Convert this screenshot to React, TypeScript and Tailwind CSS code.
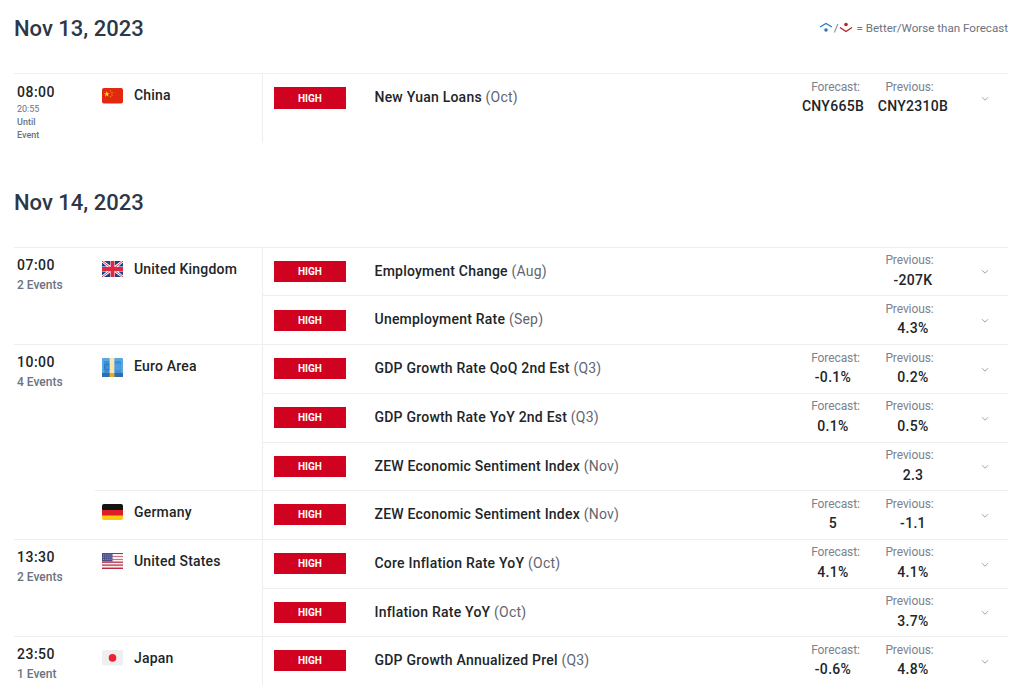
import React from "react";

type Ev = { t: string; p: string; f?: string; pv: string; h: string; o?: boolean; l?: boolean; c?: boolean };
type Ctry = { name: string; flag: React.ReactNode; events: Ev[] };
type Grp = { time: string; sub: string[]; countries: Ctry[] };

const China = () => (
  <svg width="21" height="15.5" viewBox="0 0 22 16" preserveAspectRatio="none" className="block">
    <rect width="22" height="16" rx="2" fill="#e2290f" />
    <polygon points="5,3.2 5.8,5.4 8,5.4 6.2,6.8 6.9,9 5,7.6 3.1,9 3.8,6.8 2,5.4 4.2,5.4" fill="#f8d21c" />
    <circle cx="9" cy="2.8" r=".6" fill="#f8c51c" />
    <circle cx="10.5" cy="4.8" r=".6" fill="#f8c51c" />
    <circle cx="10.5" cy="7.2" r=".6" fill="#f8c51c" />
    <circle cx="9" cy="9" r=".6" fill="#f8c51c" />
  </svg>
);
const UK = () => (
  <svg width="21" height="16" viewBox="0 0 22 16" preserveAspectRatio="none" className="block">
    <rect width="22" height="16" fill="#fff" />
    <g fill="#1f3f8f">
      <polygon points="2,0 8.5,0 8.5,4.5" />
      <polygon points="20,0 13.5,0 13.5,4.5" />
      <polygon points="2,16 8.5,16 8.5,11.5" />
      <polygon points="20,16 13.5,16 13.5,11.5" />
      <polygon points="0,1.5 5,5.5 0,5.5" />
      <polygon points="22,1.5 17,5.5 22,5.5" />
      <polygon points="0,14.5 5,10.5 0,10.5" />
      <polygon points="22,14.5 17,10.5 22,10.5" />
    </g>
    <path d="M0 0L8 6M22 0L14 6M0 16L8 10M22 16L14 10" stroke="#e0344a" strokeWidth="1" />
    <rect x="9" width="4" height="16" fill="#d92a40" />
    <rect y="6" width="22" height="4" fill="#d92a40" />
  </svg>
);
const EU = () => (
  <svg width="21" height="19" viewBox="0 0 22 19" preserveAspectRatio="none" className="block">
    <rect width="22" height="19" rx="1" fill="#58a6e6" />
    <rect x="2" y="3" width="18" height="12" fill="#3f8fd6" />
    <rect y="15" width="22" height="4" fill="#2d6ea8" />
    <circle cx="5.5" cy="9" r="3" fill="none" stroke="#2a70b4" strokeWidth="1" />
    <circle cx="16.5" cy="9" r="3.4" fill="#4f9fe0" />
    <rect x="8" width="5" height="15" fill="#f7e7b8" />
    <rect x="8" y="15" width="5" height="4" fill="#f0a52c" />
  </svg>
);
const DE = () => (
  <svg width="21" height="16" viewBox="0 0 22 16" preserveAspectRatio="none" className="block">
    <defs>
      <clipPath id="de"><rect width="22" height="16" rx="2" /></clipPath>
    </defs>
    <g clipPath="url(#de)">
      <rect width="22" height="6" fill="#141414" />
      <rect y="6" width="22" height="6" fill="#dc1f26" />
      <rect y="11.5" width="22" height="4.5" fill="#fbc90f" />
    </g>
  </svg>
);
const US = () => (
  <svg width="21" height="16" viewBox="0 0 22 16" preserveAspectRatio="none" className="block">
    <rect width="22" height="16" rx="1" fill="#f4eeee" />
    <rect y="0" width="22" height="1" fill="#b8283f" />
    <rect y="3" width="22" height="1" fill="#d0717f" />
    <rect y="6" width="22" height="1" fill="#d0717f" />
    <rect y="8.6" width="22" height="1.2" fill="#b8283f" />
    <rect y="11.5" width="22" height="1.2" fill="#b8283f" />
    <rect y="14.6" width="22" height="1.4" fill="#b8283f" />
    <rect width="11" height="8.5" fill="#4a4f8c" />
    <path d="M1 2h9M1 4.2h9M1 6.4h9" stroke="#a6a8c8" strokeWidth=".9" strokeDasharray="1 1" />
  </svg>
);
const JP = () => (
  <svg width="21" height="15.5" viewBox="0 0 22 16" preserveAspectRatio="none" className="block">
    <rect width="22" height="16" rx="2" fill="#efefef" />
    <circle cx="11" cy="8" r="4" fill="#ee2033" />
  </svg>
);

const groups: Grp[] = [
  {
    time: "07:00",
    sub: ["2 Events"],
    countries: [
      {
        name: "United Kingdom",
        flag: <UK />,
        events: [
          { t: "Employment Change", p: "(Aug)", pv: "-207K", h: "h-[47px]" },
          { t: "Unemployment Rate", p: "(Sep)", pv: "4.3%", h: "h-[49px]", o: true, l: true, c: true },
        ],
      },
    ],
  },
  {
    time: "10:00",
    sub: ["4 Events"],
    countries: [
      {
        name: "Euro Area",
        flag: <EU />,
        events: [
          { t: "GDP Growth Rate QoQ 2nd Est", p: "(Q3)", f: "-0.1%", pv: "0.2%", h: "h-[48px]", l: true, c: true },
          { t: "GDP Growth Rate YoY 2nd Est", p: "(Q3)", f: "0.1%", pv: "0.5%", h: "h-[49px]", c: true },
          { t: "ZEW Economic Sentiment Index", p: "(Nov)", pv: "2.3", h: "h-[48px]" },
        ],
      },
      {
        name: "Germany",
        flag: <DE />,
        events: [{ t: "ZEW Economic Sentiment Index", p: "(Nov)", f: "5", pv: "-1.1", h: "h-[48px]", l: true, c: true }],
      },
    ],
  },
  {
    time: "13:30",
    sub: ["2 Events"],
    countries: [
      {
        name: "United States",
        flag: <US />,
        events: [
          { t: "Core Inflation Rate YoY", p: "(Oct)", f: "4.1%", pv: "4.1%", h: "h-[48px]", c: true },
          { t: "Inflation Rate YoY", p: "(Oct)", pv: "3.7%", h: "h-[48px]" },
        ],
      },
    ],
  },
  {
    time: "23:50",
    sub: ["1 Event"],
    countries: [
      {
        name: "Japan",
        flag: <JP />,
        events: [{ t: "GDP Growth Annualized Prel", p: "(Q3)", f: "-0.6%", pv: "4.8%", h: "h-[48px]", l: true, c: true }],
      },
    ],
  },
];

const Chevron = () => (
  <svg width="8" height="6" viewBox="0 0 8 6" className="block" fill="none">
    <path d="M1 1.2L4 4.2L7 1.2" stroke="#9ca3af" strokeWidth="1" />
  </svg>
);

const Stat = ({ label, value, cls, l }: { label: string; value: string; cls: string; l?: boolean }) => (
  <div className="w-[80px] text-center">
    <div className={`text-[12px] leading-[18px] tracking-[-0.1px] text-[#7c828b] ${l ? "mt-px" : ""} ${cls}`}>{label}</div>
    <div className={`${l ? "" : "mt-px"} text-[14px] leading-[20px] font-medium text-[#212529] tracking-[0.3px] whitespace-nowrap`}>{value}</div>
  </div>
);

const Row = ({ e, first, tall }: { e: Ev; first: boolean; tall?: boolean }) => (
  <div className={`flex items-start pl-[11px] ${first ? "" : "border-t border-[#eeeeee]"} ${e.h}`}>
    <div className={e.o ? "mt-[14px]" : "mt-[13px]"}>
      <div className={`w-[72px] ${tall ? "h-[22px]" : "h-[21px]"} bg-[#d0021f] text-white text-[10px] font-bold flex items-center justify-center shrink-0`}>
        HIGH
      </div>
    </div>
    <div className="ml-[28.5px] mt-[13px] text-[14px] leading-[20px] text-[#212529] tracking-[0.22px] whitespace-nowrap flex-1">
      <span className="font-medium">{e.t}</span> <span className="text-[#5f6670]">{e.p}</span>
    </div>
    <div className="flex w-[160px] mt-[3px]">
      <div className="w-[80px]">
        {e.f && <Stat label="Forecast:" value={e.f} cls="pl-[5px]" l={e.l} />}
      </div>
      <Stat label="Previous:" value={e.pv} cls="pr-[7px]" l={e.l} />
    </div>
    <div className={`w-[55px] pl-[28px] ${e.c ? "mt-[22px]" : "mt-[21px]"}`}><Chevron /></div>
  </div>
);

export default function App() {
  return (
    <div className="w-[1009px] h-[685px] overflow-hidden bg-white pl-[14px] pr-px font-['Roboto',sans-serif]">
      <div className="flex items-center justify-between h-[56px]">
        <h2 className="text-[22px] font-medium text-[#2d3748]">Nov 13, 2023</h2>
        <div className="flex items-center pt-px text-[11.6px] text-[#6b7280] whitespace-nowrap">
          <svg width="14" height="12" viewBox="0 0 14 12" fill="none" className="mr-px">
            <path d="M1 5L7 1.5L13 5" stroke="#2f79b9" strokeWidth="1.4" />
            <circle cx="7" cy="8" r="1.8" fill="#2f79b9" />
          </svg>
          <span>/</span>
          <svg width="14" height="12" viewBox="0 0 14 12" fill="none" className="mr-[4px]">
            <path d="M1 5.5L7 9.5L13 5.5" stroke="#b0242a" strokeWidth="1.4" />
            <circle cx="7" cy="2.5" r="1.8" fill="#b0242a" />
          </svg>
          <span>= Better/Worse than Forecast</span>
        </div>
      </div>
      <div className="mt-[17px] border-t border-[#eeeeee] flex h-[70px]">
        <div className="w-[81px] pl-[3px] pt-[8px]">
          <div className="text-[14px] leading-[20px] font-medium text-[#212529] tracking-[0.5px]">08:00</div>
          <div className="text-[9px] leading-[13px] text-[#6b7280] mt-px">20:55</div>
          <div className="text-[9px] leading-[13px] text-[#6b7280] font-medium">Until</div>
          <div className="text-[9px] leading-[13px] text-[#6b7280] font-medium">Event</div>
        </div>
        <div className="w-[168px] border-r border-[#eeeeee] flex items-start pl-[7px] pt-[14px]">
          <China />
          <span className="ml-[11px] -mt-[3px] text-[14px] leading-[20px] font-medium text-[#212529] tracking-[0.2px]">China</span>
        </div>
        <div className="flex-1 min-w-0">
          <Row e={{ t: "New Yuan Loans", p: "(Oct)", f: "CNY665B", pv: "CNY2310B", h: "h-[70px]", l: true, c: true }} first tall />
        </div>
      </div>
      <h2 className="mt-[42px] h-[35px] flex items-center text-[22px] font-medium text-[#2d3748]">Nov 14, 2023</h2>
      <div className="mt-[27px]">
        {groups.map((g) => (
          <div key={g.time} className="flex border-t border-[#eeeeee]">
            <div className="w-[81px] pl-[3px] pt-[7px]">
              <div className="text-[14px] leading-[20px] font-medium text-[#212529] tracking-[0.5px]">{g.time}</div>
              <div className="text-[12px] leading-[18px] text-[#6b7280] font-medium mt-[1px]">{g.sub[0]}</div>
            </div>
            <div className="flex-1 min-w-0">
              {g.countries.map((c, ci) => (
                <div key={c.name} className={`flex ${ci ? "border-t border-[#eeeeee]" : ""}`}>
                  <div className="w-[168px] border-r border-[#eeeeee] shrink-0 flex items-start pl-[7px] pt-[13px]">
                    {c.flag}
                    <span className="ml-[11px] -mt-[2px] text-[14px] leading-[20px] font-medium text-[#212529] tracking-[0.2px] whitespace-nowrap">{c.name}</span>
                  </div>
                  <div className="flex-1 min-w-0">
                    {c.events.map((e, i) => (
                      <Row key={e.t + i} e={e} first={i === 0} />
                    ))}
                  </div>
                </div>
              ))}
            </div>
          </div>
        ))}
      </div>
    </div>
  );
}
